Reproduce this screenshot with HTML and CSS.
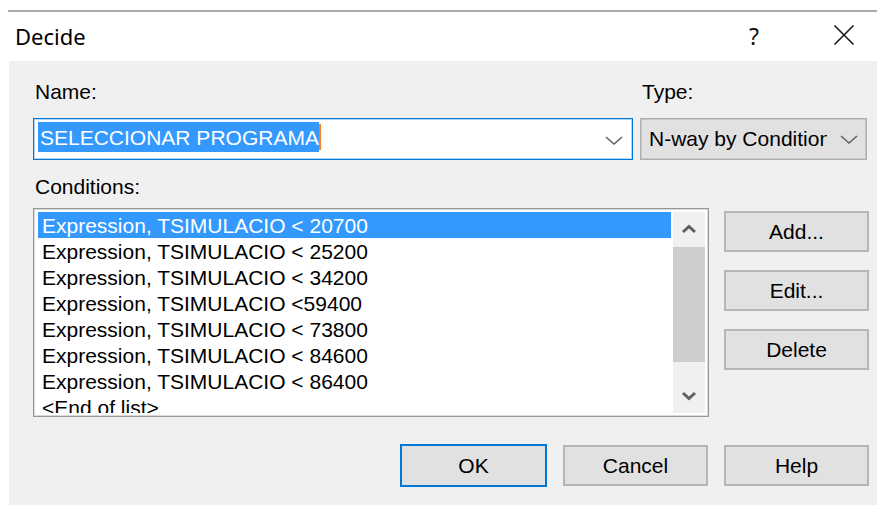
FILE: index.html
```html
<!DOCTYPE html>
<html lang="en">
<head>
<meta charset="utf-8">
<title>Decide</title>
<link rel="stylesheet" href="styles.css">
</head>
<body>
<div class="dialog">
  <div class="frame-line"></div>
  <div class="titlebar">
    <span class="title">Decide</span>
    <span class="caption-btn help">?</span>
    <span class="caption-btn close">
      <svg width="22" height="22" viewBox="0 0 22 22"><path d="M1.5 1.5 L20.5 20.5 M20.5 1.5 L1.5 20.5" stroke="#1a1a1a" stroke-width="1.6" fill="none"/></svg>
    </span>
  </div>
  <div class="client">
    <div class="top-row">
      <div class="name-col">
        <div class="label">Name:</div>
        <div class="combo edit-combo">
          <span class="sel-text">SELECCIONAR PROGRAMA</span><span class="caret"></span>
          <svg class="chev" width="18" height="9" viewBox="0 0 18 9"><path d="M1 1 L9 8 L17 1" stroke="#606060" stroke-width="1.5" fill="none"/></svg>
        </div>
      </div>
      <div class="type-col">
        <div class="label">Type:</div>
        <div class="combo list-combo">
          <span class="combo-text">N-way by Condition</span>
          <svg class="chev" width="18" height="9" viewBox="0 0 18 9"><path d="M1 1 L9 8 L17 1" stroke="#606060" stroke-width="1.5" fill="none"/></svg>
        </div>
      </div>
    </div>

    <div class="label cond-label">Conditions:</div>

    <div class="mid-row">
      <div class="listbox">
        <ul class="items">
          <li class="item selected">Expression, TSIMULACIO &lt; 20700</li>
          <li class="item">Expression, TSIMULACIO &lt; 25200</li>
          <li class="item">Expression, TSIMULACIO &lt; 34200</li>
          <li class="item">Expression, TSIMULACIO &lt;59400</li>
          <li class="item">Expression, TSIMULACIO &lt; 73800</li>
          <li class="item">Expression, TSIMULACIO &lt; 84600</li>
          <li class="item">Expression, TSIMULACIO &lt; 86400</li>
          <li class="item">&lt;End of list&gt;</li>
        </ul>
        <div class="scrollbar">
          <div class="sb-arrow">
            <svg width="16" height="10" viewBox="0 0 16 10"><path d="M2 8 L8 2.5 L14 8" stroke="#606060" stroke-width="3" fill="none"/></svg>
          </div>
          <div class="sb-thumb"></div>
          <div class="sb-track"></div>
          <div class="sb-arrow">
            <svg width="16" height="10" viewBox="0 0 16 10"><path d="M2 2 L8 7.5 L14 2" stroke="#606060" stroke-width="3" fill="none"/></svg>
          </div>
        </div>
      </div>
      <div class="side-buttons">
        <button class="btn">Add...</button>
        <button class="btn">Edit...</button>
        <button class="btn">Delete</button>
      </div>
    </div>

    <div class="bottom-row">
      <button class="btn default">OK</button>
      <button class="btn">Cancel</button>
      <button class="btn">Help</button>
    </div>
  </div>
</div>
</body>
</html>
```

FILE: styles.css
```css
html, body {
  margin: 0;
  padding: 0;
  background: #ffffff;
}

body {
  width: 877px;
  height: 506px;
  overflow: hidden;
  font-family: "Liberation Sans", Arial, sans-serif;
  font-size: 21px;
  color: #000;
}

.dialog {
  width: 877px;
  height: 506px;
  display: flex;
  flex-direction: column;
}

/* thin window frame edge above the caption */
.frame-line {
  height: 2px;
  margin: 10px 0 0 8px;
  background: #a9a9a9;
}

.titlebar {
  height: 49px;
  display: flex;
  align-items: center;
  padding-left: 15px;
  background: #ffffff;
}

.title {
  font-family: "Noto Sans", "Open Sans", sans-serif;
  font-size: 22px;
  color: #000;
  margin-top: -2px;
}

.caption-btn {
  width: 46px;
  height: 46px;
  display: flex;
  align-items: center;
  justify-content: center;
}

.help {
  margin-left: auto;
  margin-right: 44px;
  font-family: "Noto Sans", sans-serif;
  font-size: 23px;
  color: #111;
  margin-top: -2px;
}

.close {
  margin-right: 10px;
  margin-top: -4px;
}

/* dialog client area */
.client {
  margin-left: 9px;
  height: 444px;
  box-sizing: border-box;
  background: #f0f0f0;
  padding: 18px 8px 0 24px;
  display: flex;
  flex-direction: column;
}

.top-row {
  display: flex;
  gap: 7px;
}

.name-col {
  width: 600px;
}

.type-col {
  width: 227px;
}

.label {
  height: 26px;
  line-height: 26px;
  padding-left: 2px;
  margin-bottom: 13px;
}

.combo {
  position: relative;
  height: 42px;
  box-sizing: border-box;
  display: flex;
  align-items: flex-start;
}

.edit-combo {
  background: #ffffff;
  border: 1px solid #0078d7;
  box-shadow: inset 0 0 0 1px rgba(0, 120, 215, 0.3);
  padding: 3px 0 0 4px;
}

.sel-text {
  display: inline-block;
  height: 30px;
  line-height: 31px;
  padding-left: 2px;
  background: #3399ff;
  color: #ffffff;
  white-space: nowrap;
}

.caret {
  display: inline-block;
  width: 2px;
  height: 26px;
  margin-top: 2px;
  background: #ff7f1e;
}

.chev {
  margin-left: auto;
  margin-right: 9px;
  align-self: center;
}

.list-combo {
  background: #e1e1e1;
  border: 1px solid #adadad;
  box-shadow: inset 0 0 0 1px #c8c8c8;
  align-items: center;
  padding-left: 8px;
}

.combo-text {
  display: block;
  width: 178px;
  overflow: hidden;
  white-space: nowrap;
  line-height: 26px;
}

.list-combo .chev {
  margin-right: 8px;
}

.cond-label {
  margin-top: 14px;
  margin-bottom: 8px;
}

.mid-row {
  display: flex;
  gap: 15px;
}

.listbox {
  width: 676px;
  height: 209px;
  box-sizing: border-box;
  border: 1px solid #979797;
  box-shadow: inset 0 0 0 1px #dadada;
  background: #ffffff;
  padding: 3px 3px 3px 4px;
  display: flex;
}

.items {
  list-style: none;
  margin: 0;
  padding: 0;
  width: 633px;
  height: 201px;
  overflow: hidden;
}

.item {
  height: 26px;
  line-height: 27px;
  padding-left: 4px;
  white-space: nowrap;
}

.item.selected {
  background: #3399ff;
  color: #ffffff;
}

.scrollbar {
  width: 32px;
  height: 201px;
  margin-left: 2px;
  background: #f0f0f0;
  display: flex;
  flex-direction: column;
}

.sb-arrow {
  height: 34px;
  display: flex;
  align-items: center;
  justify-content: center;
}

.sb-thumb {
  height: 115px;
  margin-top: 1px;
  background: #cdcdcd;
}

.sb-track {
  flex: 1;
}

.side-buttons {
  display: flex;
  flex-direction: column;
  gap: 18px;
  padding-top: 3px;
}

.btn {
  width: 145px;
  height: 41px;
  box-sizing: border-box;
  margin: 0;
  padding: 0;
  background: #e1e1e1;
  border: 2px solid #b6b6b6;
  font-family: "Liberation Sans", Arial, sans-serif;
  font-size: 21px;
  color: #000;
  line-height: 37px;
  text-align: center;
}

.bottom-row {
  display: flex;
  justify-content: flex-end;
  align-items: center;
  gap: 16px;
  margin-top: 27px;
}

.btn.default {
  width: 147px;
  height: 43px;
  border: 2px solid #0078d7;
  line-height: 39px;
}
```
